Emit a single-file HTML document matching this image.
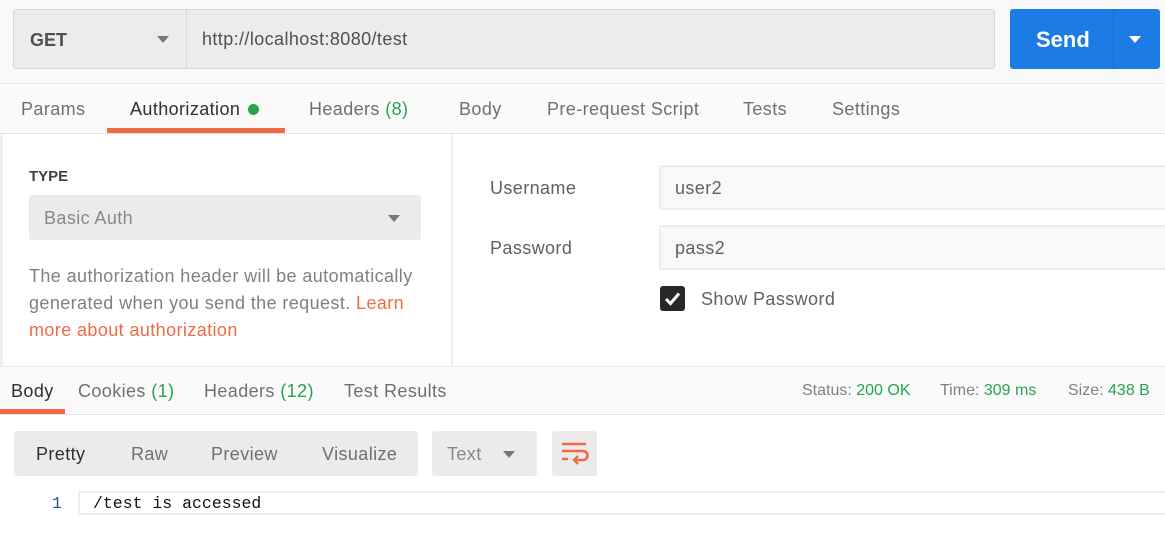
<!DOCTYPE html>
<html><head><meta charset="utf-8"><style>
*{margin:0;padding:0;box-sizing:border-box}
body{width:1165px;height:555px;overflow:hidden;background:#fff;font-family:"Liberation Sans",sans-serif;position:relative;color:#505050}
.a{position:absolute;white-space:nowrap}
.t{font-size:18px;letter-spacing:0.4px}
.g{color:#26a550}
.o{color:#f06b45}
.tri{display:block;width:0;height:0;border-left:6px solid transparent;border-right:6px solid transparent;border-top:7px solid #777}
</style></head><body>
<!-- top bar -->
<div class="a" style="left:0;top:0;width:1165px;height:84px;background:#f9f9f9;border-bottom:1px solid #e8e8e8"></div>
<div class="a" style="left:13px;top:9px;width:982px;height:60px;background:#ececec;border:1px solid #d8d8d8;border-radius:3px"></div>
<div class="a" style="left:186px;top:10px;width:1px;height:58px;background:#d8d8d8"></div>
<div class="a" style="left:30px;top:30px;font-size:18px;font-weight:bold;color:#505050">GET</div>
<div class="a tri" style="left:157px;top:36px"></div>
<div class="a t" style="left:202px;top:29px;color:#505050">http://localhost:8080/test</div>
<div class="a" style="left:1010px;top:9px;width:150px;height:60px;background:#1d7be6;border-radius:3px"></div>
<div class="a" style="left:1113px;top:9px;width:1px;height:60px;background:#1a6ec8"></div>
<div class="a" style="left:1036px;top:27px;font-size:22px;font-weight:bold;color:#fff">Send</div>
<div class="a tri" style="left:1129px;top:36px;border-top-color:#fff"></div>
<!-- request tabs -->
<div class="a" style="left:0;top:85px;width:1165px;height:49px;background:#fafafa;border-bottom:1px solid #e4e4e4"></div>
<div class="a t" style="left:21px;top:99px;color:#707070">Params</div>
<div class="a t" style="left:130px;top:99px;color:#303030">Authorization <span style="display:inline-block;width:11px;height:11px;border-radius:50%;background:#26a550;margin-left:2px"></span></div>
<div class="a" style="left:107px;top:128px;width:178px;height:5px;background:#f06b45"></div>
<div class="a t" style="left:309px;top:99px;color:#707070">Headers <span class="g">(8)</span></div>
<div class="a t" style="left:459px;top:99px;color:#707070">Body</div>
<div class="a t" style="left:547px;top:99px;color:#707070">Pre-request Script</div>
<div class="a t" style="left:743px;top:99px;color:#707070">Tests</div>
<div class="a t" style="left:832px;top:99px;color:#707070">Settings</div>
<!-- auth panel -->
<div class="a" style="left:0;top:135px;width:3px;height:232px;background:#eee"></div>
<div class="a" style="left:451px;top:135px;width:2px;height:232px;background:#ececec"></div>
<div class="a" style="left:29px;top:168px;font-size:15px;font-weight:bold;color:#404040">TYPE</div>
<div class="a" style="left:29px;top:195px;width:392px;height:45px;background:#ebebeb;border-radius:3px"></div>
<div class="a t" style="left:44px;top:208px;color:#888">Basic Auth</div>
<div class="a tri" style="left:388px;top:215px"></div>
<div class="a t" style="left:29px;top:263px;line-height:27px;color:#808080;white-space:normal;width:395px">The authorization header will be automatically generated when you send the request. <span class="o">Learn more about authorization</span></div>
<div class="a t" style="left:490px;top:178px;color:#606060">Username</div>
<div class="a" style="left:659px;top:165px;width:510px;height:45px;background:#f8f8f8;border:2px solid #ececec;border-radius:3px"></div>
<div class="a t" style="left:675px;top:178px;color:#606060">user2</div>
<div class="a t" style="left:490px;top:238px;color:#606060">Password</div>
<div class="a" style="left:659px;top:225px;width:510px;height:45px;background:#f8f8f8;border:2px solid #ececec;border-radius:3px"></div>
<div class="a t" style="left:675px;top:238px;color:#606060">pass2</div>
<div class="a" style="left:660px;top:286px;width:25px;height:25px;background:#282828;border-radius:3px"><svg width="25" height="25" viewBox="0 0 25 25"><path d="M6 13l4.5 4.5L19 7.5" stroke="#fff" stroke-width="3" fill="none"/></svg></div>
<div class="a t" style="left:701px;top:289px;color:#606060">Show Password</div>
<!-- response tabs -->
<div class="a" style="left:0;top:366px;width:1165px;height:49px;background:#fafafa;border-top:1px solid #e8e8e8;border-bottom:1px solid #e4e4e4"></div>
<div class="a t" style="left:11px;top:381px;color:#303030">Body</div>
<div class="a" style="left:0;top:409px;width:65px;height:5px;background:#f06b45"></div>
<div class="a t" style="left:78px;top:381px;color:#707070">Cookies <span class="g">(1)</span></div>
<div class="a t" style="left:204px;top:381px;color:#707070">Headers <span class="g">(12)</span></div>
<div class="a t" style="left:344px;top:381px;color:#707070">Test Results</div>
<div class="a" style="left:802px;top:382px;font-size:16px;color:#808080">Status: <span class="g">200 OK</span></div>
<div class="a" style="left:940px;top:382px;font-size:16px;color:#808080">Time: <span class="g">309 ms</span></div>
<div class="a" style="left:1068px;top:382px;font-size:16px;color:#808080">Size: <span class="g">438 B</span></div>
<!-- body toolbar -->
<div class="a" style="left:14px;top:431px;width:404px;height:45px;background:#ebebeb;border-radius:3px"></div>
<div class="a t" style="left:36px;top:444px;color:#303030">Pretty</div>
<div class="a t" style="left:131px;top:444px;color:#707070">Raw</div>
<div class="a t" style="left:211px;top:444px;color:#707070">Preview</div>
<div class="a t" style="left:322px;top:444px;color:#707070">Visualize</div>
<div class="a" style="left:432px;top:431px;width:105px;height:45px;background:#ebebeb;border-radius:3px"></div>
<div class="a t" style="left:447px;top:444px;color:#888">Text</div>
<div class="a tri" style="left:503px;top:451px"></div>
<div class="a" style="left:552px;top:431px;width:45px;height:45px;background:#ebebeb;border-radius:3px"><svg width="45" height="45" viewBox="0 0 45 45"><path d="M10 13h24M10 20h21a4.5 4.5 0 0 1 0 9h-8M10 28h6" stroke="#f06b45" stroke-width="2.6" fill="none"/><path d="M26 25l-4 4 4 4" stroke="#f06b45" stroke-width="2.4" fill="none"/></svg></div>
<!-- code -->
<div class="a" style="left:78px;top:491px;width:1087px;height:24px;border-top:2px solid #eee;border-bottom:2px solid #eee;border-left:2px solid #eee"></div>
<div class="a" style="left:52px;top:494px;font-family:'Liberation Mono',monospace;font-size:16.5px;color:#2a4f8a">1</div>
<div class="a" style="left:93px;top:494px;font-family:'Liberation Mono',monospace;font-size:16.5px;color:#111">/test is accessed</div>
</body></html>
